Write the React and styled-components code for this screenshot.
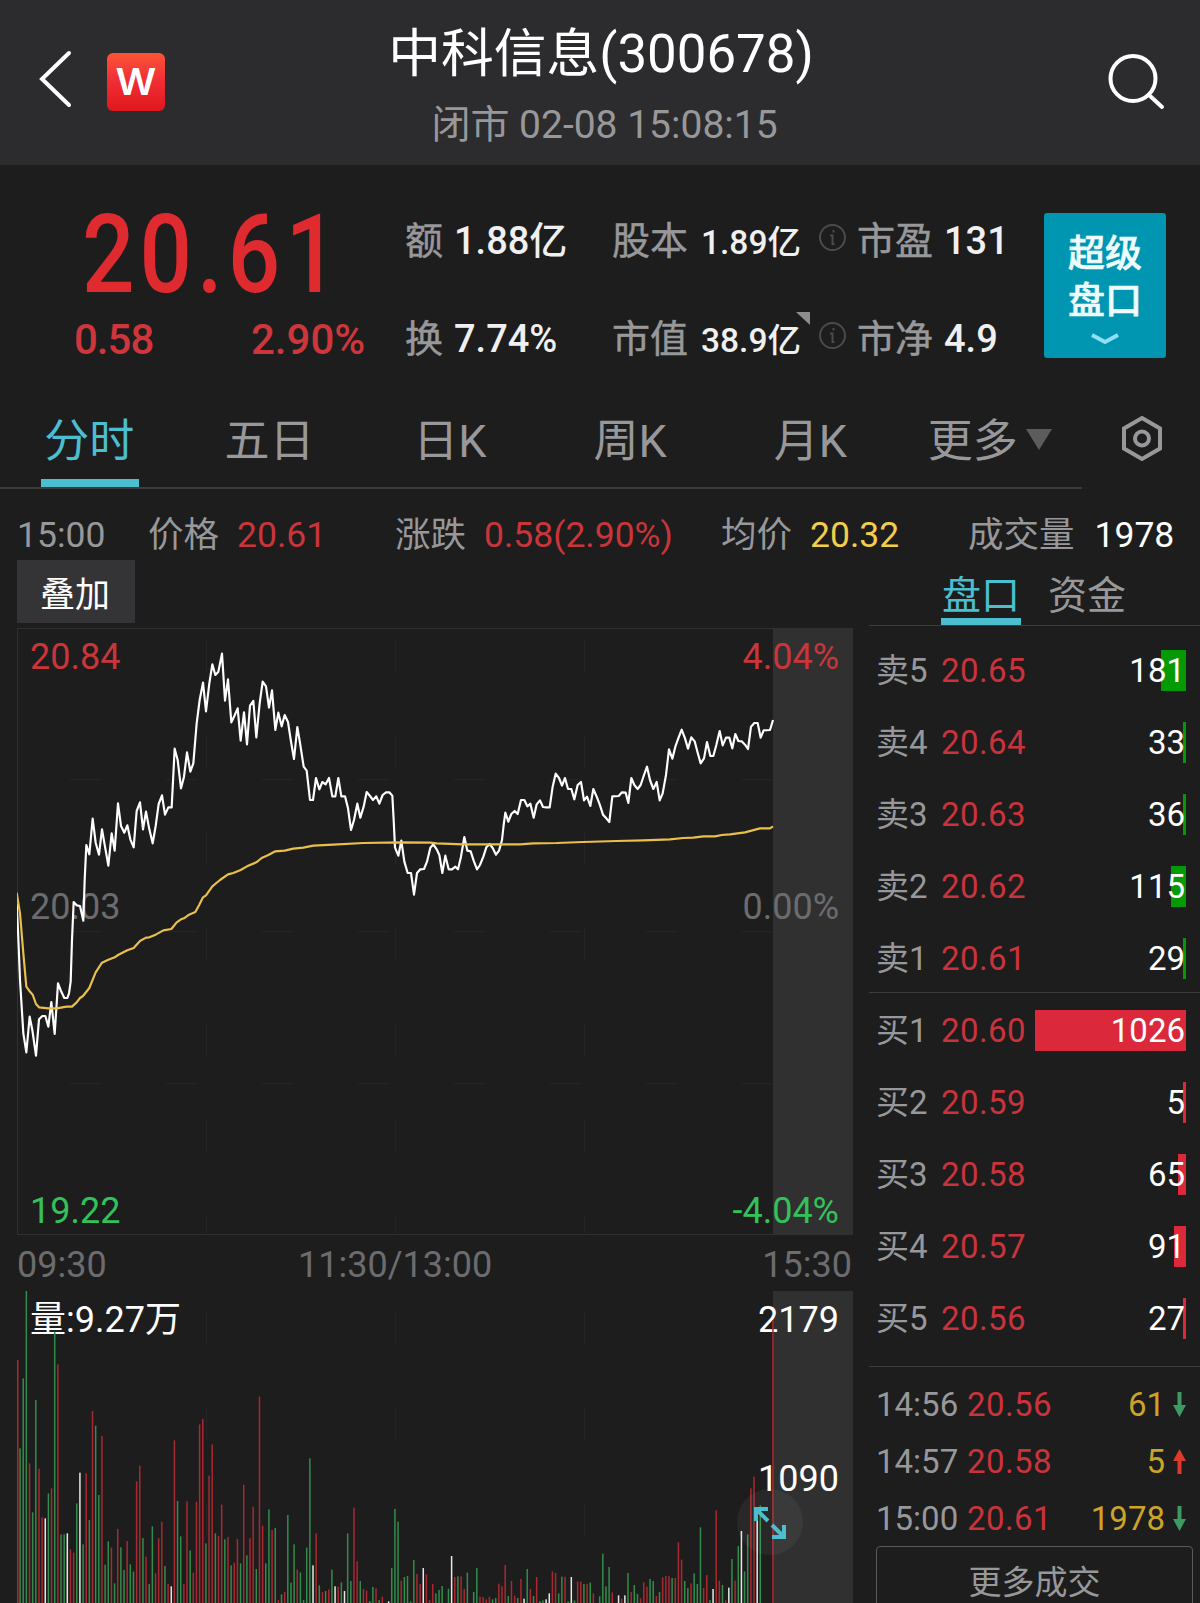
import styled, { createGlobalStyle, css } from 'styled-components'

const GlobalStyle = createGlobalStyle`
  * {
    box-sizing: border-box;
  }
  body {
    margin: 0;
    background: #1d1d1f;
    color: #fff;
    font-family: Roboto, 'Noto Sans CJK SC', sans-serif;
  }
`

const colors = {
  red: '#ca353a',
  green: '#33c25a',
  teal: '#4bbfd0',
  muted: '#98989a',
  dim: '#6c6c6e',
  line: '#3c3c3e'
}

const Page = styled.main`
  width: 1200px;
  height: 1603px;
  overflow: hidden;
  background: #1d1d1e;
  white-space: nowrap;
`

/* Header */

const Header = styled.header`
  display: grid;
  grid-template-columns: 1fr auto 1fr;
  height: 165px;
  background: #2c2c2e;
`

const HeaderLeft = styled.div`
  display: flex;
  align-items: flex-start;
  gap: 33px;
  padding: 50px 0 0 38px;
`

const Logo = styled.div`
  width: 58px;
  height: 58px;
  margin-top: 3px;
  border-radius: 6px;
  background: linear-gradient(#fb5437, #f02c35 50%, #e0181d);
  font: 600 37px/57px Inter, sans-serif;
  text-align: center;

  span {
    display: block;
    transform: scaleX(1.08);
  }
`

const HeaderTitle = styled.div`
  padding-top: 18px;
  text-align: center;
`

const StockName = styled.h1`
  margin: 0;
  padding-left: 2px;
  font-size: 52.8px;
  font-weight: 400;
  line-height: 72px;
`

const MarketTime = styled.div`
  padding-left: 9px;
  font-size: 39px;
  line-height: 70px;
  color: ${colors.muted};
`

const HeaderRight = styled.div`
  display: flex;
  justify-content: flex-end;
  padding: 52px 34px 0 0;
`

/* Quote */

const Quote = styled.section`
  display: flex;
  height: 237px;
`

const PriceBlock = styled.div`
  width: 405px;
  padding-top: 34px;
  color: #df2b30;
  font-weight: 500;
`

const Price = styled.div`
  padding-left: 82px;
  font-size: 110px;
  line-height: 111px;

  span {
    display: inline-block;
    letter-spacing: 6px;
    transform: scaleX(0.84);
    transform-origin: left;
  }
`

const Change = styled.div`
  display: grid;
  grid-template-columns: 177px auto;
  padding-left: 74px;
  font-size: 42px;
  line-height: 60px;
  color: #cf363b;

  span:first-child {
    letter-spacing: -1px;
  }
`

const Stats = styled.div`
  display: grid;
  grid-template-columns: 207px 207px 38px 1fr;
  grid-template-rows: 98px 99px;
  width: 639px;
  padding-top: 27px;
`

const Stat = styled.div`
  position: relative;
  display: flex;
  align-items: baseline;
  gap: ${p => (p.$small ? 13 : 11)}px;
  font-size: 38px;
  font-weight: 500;
  line-height: 98px;
  color: #f0f0f0;

  b {
    font-weight: 500;
    font-size: ${p => (p.$small ? 33.5 : 38)}px;
  }
`

const StatLabel = styled.span`
  font-weight: 400;
  -webkit-text-stroke: 0.5px;
  color: ${colors.muted};
`

const Corner = styled.i`
  position: absolute;
  top: 22px;
  left: 184px;
  width: 14px;
  height: 13px;
  background: #8e8e90;
  clip-path: polygon(0 0, 100% 0, 100% 100%);
`

const InfoCell = styled.div`
  padding-top: 31px;
`

const SuperButton = styled.button`
  display: flex;
  flex-direction: column;
  align-items: center;
  width: 122px;
  height: 145px;
  margin-top: 48px;
  padding: 15px 0 0;
  border: 0;
  border-radius: 3px;
  background: #0095b0;
  color: #eefcff;
  font: 500 37px/47px 'Noto Sans CJK SC', sans-serif;
  -webkit-text-stroke: 0.6px;

  svg {
    margin-top: 10px;
  }
`

/* Period tabs */

const TabBar = styled.nav`
  display: flex;
`

const Tabs = styled.div`
  display: grid;
  grid-template-columns: repeat(6, 1fr);
  width: 1082px;
  border-bottom: 2px solid ${colors.line};
`

const Tab = styled.div`
  display: flex;
  justify-content: center;
  align-items: center;
  font-size: 45px;
  line-height: 75px;
  color: ${colors.muted};

  span {
    padding: 2px 5px 0 3px;
    border-bottom: 8px solid transparent;
    ${p => p.$active && css`
      color: ${colors.teal};
      border-color: ${colors.teal};
    `}
  }
`

const MoreTab = styled(Tab)`
  gap: 3px;
  padding-right: 7px;

  svg {
    margin-bottom: 10px;
  }
`

const Settings = styled.div`
  padding: 13px 0 0 39px;
`

const Summary = styled.div`
  display: grid;
  grid-template-columns: 131px 247px 326px 247px 1fr;
  margin-top: 21px;
  padding-left: 17px;
  font-size: 35.5px;
  line-height: 50px;
  color: ${colors.muted};
`

const SummaryItem = styled.div`
  display: flex;
  gap: 18px;

  b {
    font-weight: 400;
    color: ${p => p.$color};
  }

  &:last-child {
    gap: 20px;
  }
`

/* Charts */

const Body = styled.div`
  display: flex;
`

const ChartColumn = styled.div`
  width: 869px;
  padding-left: 17px;
`

const Overlay = styled.button`
  display: block;
  width: 118px;
  height: 63px;
  margin-bottom: 5px;
  padding: 0 2px 2px 0;
  border: 0;
  background: #343437;
  color: #fff;
  font: 400 35px/63px 'Noto Sans CJK SC', sans-serif;
`

const ChartBox = styled.div`
  position: relative;
  width: 836px;
  height: ${p => p.$height}px;

  svg {
    position: relative;
    display: block;
  }
`

const ChartLabel = styled.span`
  position: absolute;
  top: ${p => p.$top}px;
  ${p => (p.$right ? 'right: 14px' : 'left: 13px')};
  font-size: 36px;
  line-height: 40px;
  color: ${p => p.$color || '#fff'};
`

const TimeAxis = styled.div`
  display: grid;
  grid-template-columns: 281px 1fr auto;
  width: 835px;
  height: 56px;
  font-size: 36px;
  line-height: 60px;
  color: ${colors.dim};
`

const ExpandButton = styled.div`
  position: absolute;
  top: 198px;
  left: 720px;
  width: 66px;
  height: 66px;
  border-radius: 50%;
  background: rgba(255, 255, 255, 0.05);
`

/* Order book */

const Book = styled.aside`
  width: 331px;
`

const BookTabs = styled.div`
  display: flex;
  gap: 26px;
  padding: 14px 0 0 72px;
  border-bottom: 1px solid ${colors.line};
`

const BookTab = styled.div`
  width: 80px;
  font-size: 39px;
  line-height: 44px;
  text-align: center;
  color: ${p => (p.$active ? colors.teal : colors.muted)};
  border-bottom: 7px solid ${p => (p.$active ? colors.teal : 'transparent')};
`

const Levels = styled.div`
  padding: ${p => (p.$sell ? '8px 14px 0 7px' : '1px 14px 0 7px')};
  height: ${p => (p.$sell ? 367 : 374)}px;
  border-bottom: 1px solid ${colors.line};
`

const Level = styled.div`
  display: grid;
  grid-template-columns: 65px 94px 151px;
  align-items: center;
  height: 72px;
  font-size: 33px;
  line-height: 41px;
  color: ${colors.muted};
`

const LevelPrice = styled.span`
  letter-spacing: 0.4px;
  color: #c9343c;
`

const Qty = styled.span`
  padding-right: 1px;
  text-align: right;
  color: #fff;
  background: linear-gradient(${p => p.$color}, ${p => p.$color}) right / ${p => p.$bar}px 100% no-repeat;
`

const Trades = styled.div`
  padding: 9px 14px 0 7px;
`

const Trade = styled.div`
  display: grid;
  grid-template-columns: 91px 1fr auto 13px;
  align-items: center;
  height: 57px;
  font-size: 33px;
  color: ${colors.muted};

  em {
    margin-right: 8px;
    font-style: normal;
    color: #cba428;
  }
`

const MoreTrades = styled.button`
  display: block;
  width: 317px;
  height: 68px;
  margin: -1px 0 0 7px;
  padding: 0;
  border: 1px solid #5a5a5c;
  border-radius: 4px;
  background: none;
  color: ${colors.muted};
  font: 400 33px/64px 'Noto Sans CJK SC', sans-serif;
`

const sells = [
  ['卖5', '20.65', 181, 25],
  ['卖4', '20.64', 33, 3],
  ['卖3', '20.63', 36, 3],
  ['卖2', '20.62', 115, 15],
  ['卖1', '20.61', 29, 3]
]

const buys = [
  ['买1', '20.60', 1026, 151],
  ['买2', '20.59', 5, 3],
  ['买3', '20.58', 65, 8],
  ['买4', '20.57', 91, 12],
  ['买5', '20.56', 27, 3]
]

const trades = [
  ['14:56', '20.56', 61, 'down'],
  ['14:57', '20.58', 5, 'up'],
  ['15:00', '20.61', 1978, 'down']
]

// Chart coordinates are three units to a pixel
const priceLine = `50,850 54,930 60,1080 70,1240 79,1297 89,1190 97,1230 108,1307 117,1198 127,1188 136,1188 145,1220
154,1146 164,1242 174,1090 183,1113 193,1134 202,1134 207,1120 212,1085 216,960 221,846 230,856 240,858 250,902
254,780 259,675 268,703 278,596 287,668 297,704 306,628 315,680 325,737 335,640 344,692 354,550 363,618 373,638
382,616 391,658 401,682 410,573 420,547 429,628 438,575 448,628 458,670 467,618 476,552 486,526 495,584 505,562
515,562 524,386 533,420 543,505 552,470 561,397 571,455 580,430 590,310 599,240 609,188 618,274 628,190 637,133
646,165 655,155 666,101 675,242 684,178 694,307 703,288 713,265 722,362 732,277 741,373 750,257 760,243 769,352
779,250 788,185 798,199 807,263 816,211 826,330 835,278 845,319 854,285 864,306 873,365 882,417 892,321 901,375
911,440 920,452 930,540 939,540 948,474 958,508 967,486 977,493 987,474 997,529 1006,529 1015,474 1024,529
1035,529 1044,565 1053,630 1062,600 1072,551 1081,593 1091,560 1100,516 1110,528 1119,540 1129,529 1138,551
1148,525 1158,517 1168,517 1177,527 1181,600 1185,683 1195,707 1204,662 1213,725 1223,759 1233,759 1242,824
1251,759 1261,748 1272,747 1281,725 1291,683 1300,673 1310,688 1318,705 1327,759 1336,707 1346,748 1356,748
1366,740 1374,748 1383,710 1393,651 1402,692 1412,694 1421,722 1431,748 1440,735 1450,710 1459,682 1469,672
1478,684 1488,704 1497,692 1506,660 1511,615 1516,578 1525,605 1534,582 1544,573 1553,582 1563,540 1573,540
1582,559 1591,551 1601,593 1610,553 1620,541 1629,561 1639,562 1649,562 1658,500 1667,461 1677,474 1686,497
1695,474 1704,507 1714,507 1723,538 1733,495 1743,486 1752,541 1761,530 1771,558 1780,507 1790,530 1799,553
1809,584 1819,595 1828,606 1837,529 1856,528 1866,517 1877,518 1885,549 1894,474 1903,495 1913,507 1922,495
1932,465 1941,440 1950,480 1960,507 1970,486 1979,541 1988,520 1998,465 2007,388 2017,416 2026,380 2036,352
2045,329 2055,355 2064,386 2074,352 2084,364 2093,398 2102,430 2112,415 2121,366 2131,408 2140,408 2149,375
2159,333 2168,376 2178,353 2188,353 2197,385 2206,342 2215,363 2225,364 2235,374 2244,387 2253,320 2263,309
2273,309 2282,353 2291,331 2310,330 2319,300`

const averageLine = `50,818 60,880 70,1000 79,1100 89,1114 98,1124 108,1152 117,1162 145,1165 170,1165 200,1160 216,1160
230,1147 240,1134 249,1128 268,1104 287,1057 306,1028 325,1019 344,1012 354,1005 382,991 401,984 420,963 438,953
448,952 467,944 490,931 514,927 530,907 543,898 552,895 567,884 586,876 598,854 609,832 618,826 637,799 660,780
684,763 700,759 722,750 741,739 769,727 785,714 805,705 826,694 854,692 880,686 910,683 940,677 1000,674 1090,669
1200,667 1290,668 1310,670 1390,673 1560,673 1600,670 1670,669 1750,666 1850,663 1930,661 2010,658 2050,654
2080,653 2110,649 2145,649 2165,645 2190,643 2235,637 2280,625 2310,625 2319,619`

// One entry a minute: colour letter and the top of the bar
const volumes = `r270 g535 g325 g63 r580 g727 g390 r596 r742 w745 g670 r655 g185 r283 g793 g793 w790 r838 r848 g700
w608 g823 r610 g750 r423 g467 g675 r498 g884 g814 r833 g940 r777 g832 g900 r813 g883 g905 r634 r587
g804 r860 g942 g769 r910 r805 r755 g888 r942 w949 r511 g693 g799 r942 r694 g841 r908 r695 r463 r447
g820 r617 r523 g790 r798 r704 g808 r801 g886 r878 r807 g880 r644 g856 r805 r710 g897 r380 r767 g880
g718 r780 g774 r990 g973 r966 g735 g938 g823 r899 g907 g990 g833 g565 w886 r790 g946 r966 g963 r958
g899 w949 r950 g937 w963 g790 g933 r713 r874 g933 r957 r962 g993 g951 r955 g990 r980 g999 w994 g894
g717 g755 r932 g921 g918 g994 g870 r912 r942 w894 r913 r990 r942 g970 g960 g948 g999 g956 w858 r921
g919 r919 r957 g908 g999 g966 g894 r980 r981 r988 r980 g988 g984 r941 r949 r885 g978 r933 r977 g984
r927 w986 g897 r957 g978 r921 g993 g991 w988 w970 r904 r909 g970 g920 r920 g994 w921 g991 r935 r935
g942 r942 g938 r970 g999 g979 g851 g949 g891 r967 g999 w976 r986 w976 g909 r966 g945 g972 r985 r937
r950 g927 g933 r978 g966 r922 r918 r918 g924 r924 r817 r869 g933 g954 r940 g910 g942 g772 r954 r915
g990 w957 r721 r932 g945 r991 w953 g867 r932 g828 w783 g904 g793 r655 r620 w717 g706 g999 g999 g999
r150`.split(/\s+/)

const barColor = { r: '#a8292f', g: '#328c4b', w: '#e6e6e6' }

const InfoIcon = () => (
  <svg width="27" height="29" viewBox="0 0 27 29" fill="none" stroke="#4b4b4d" strokeWidth="2">
    <circle cx="13.5" cy="14.5" r="12.5" />
    <path d="M14.500 7v2.500M11 12.500h2.500v8.500h2" />
  </svg>
)

const TradeArrow = ({ dir }) => (
  <svg width="13" height="25" viewBox="0 0 13 25" fill={dir === 'up' ? '#dd3a2c' : '#3d9b62'}>
    <path
      d="M4.5 0h4v13H13L6.5 25 0 13h4.5z"
      transform={dir === 'up' ? 'rotate(180 6.5 12.5)' : undefined}
    />
  </svg>
)

const PriceChart = () => (
  <svg width="836" height="607" viewBox="51 24 2508 1821" fill="none">
    <g stroke="#27272a" strokeWidth="3">
      <path d="M620 60v1780M1187 60v1780M1754 60v1780" strokeDasharray="96 192" />
      <path d="M52 479h2265M52 935h2265M52 1391h2265" strokeDasharray="96 192" strokeDashoffset="130" />
    </g>
    <path d="M2559 25.500H52.500V1843.500H2559" stroke="#303033" strokeWidth="3" />
    <polyline points={priceLine} stroke="#fff" strokeWidth="6.500" strokeLinejoin="round" />
    <polyline points={averageLine} stroke="#e9c04a" strokeWidth="6.500" strokeLinejoin="round" />
  </svg>
)

const VolumeChart = () => (
  <svg width="836" height="312" viewBox="51 63 2508 936">
    <path d="M620 63v936M1187 63v936M1754 63v936" stroke="#26262a" strokeWidth="3" strokeDasharray="96 192" strokeDashoffset="-63" />
    {volumes.map((v, i) => (
      <rect key={i} x={Math.max(51, 48.5 + i * 9.45)} y={v.slice(1)} width="4.500" height="1000" fill={barColor[v[0]]} />
    ))}
  </svg>
)

const Shade = styled.div`
  position: absolute;
  top: 0;
  right: 0;
  bottom: 0;
  width: 80px;
  background: #303031;
`

const LevelList = ({ rows, color, sell }) => (
  <Levels $sell={sell}>
    {rows.map(([label, price, qty, bar]) => (
      <Level key={label}>
        <span>{label}</span>
        <LevelPrice>{price}</LevelPrice>
        <Qty $color={color} $bar={bar}>{qty}</Qty>
      </Level>
    ))}
  </Levels>
)

const App = () => (
  <Page>
    <GlobalStyle />
    <Header>
      <HeaderLeft>
        <svg width="36" height="60" viewBox="0 0 36 60" fill="none" stroke="#fff" strokeWidth="4" strokeLinecap="round">
          <path d="M31 3 4 29 31 55" />
        </svg>
        <Logo><span>W</span></Logo>
      </HeaderLeft>
      <HeaderTitle>
        <StockName>中科信息(300678)</StockName>
        <MarketTime>闭市 02-08 15:08:15</MarketTime>
      </HeaderTitle>
      <HeaderRight>
        <svg width="60" height="60" viewBox="0 0 60 60" fill="none" stroke="#fff" strokeWidth="4" strokeLinecap="round">
          <circle cx="27" cy="26.500" r="22.500" />
          <path d="M43 43 56 55" />
        </svg>
      </HeaderRight>
    </Header>

    <Quote>
      <PriceBlock>
        <Price><span>20.61</span></Price>
        <Change>
          <span>0.58</span>
          <span>2.90%</span>
        </Change>
      </PriceBlock>
      <Stats>
        <Stat><StatLabel>额</StatLabel><b>1.88亿</b></Stat>
        <Stat $small><StatLabel>股本</StatLabel><b>1.89亿</b></Stat>
        <InfoCell><InfoIcon /></InfoCell>
        <Stat><StatLabel>市盈</StatLabel><b>131</b></Stat>
        <Stat><StatLabel>换</StatLabel><b>7.74%</b></Stat>
        <Stat $small><StatLabel>市值</StatLabel><b>38.9亿</b><Corner /></Stat>
        <InfoCell><InfoIcon /></InfoCell>
        <Stat><StatLabel>市净</StatLabel><b>4.9</b></Stat>
      </Stats>
      <SuperButton>
        <span>超级</span>
        <span>盘口</span>
        <svg width="28" height="14" viewBox="0 0 28 14" fill="none" stroke="#8fe0f5" strokeWidth="4">
          <path d="M1 3 14 10 27 3" />
        </svg>
      </SuperButton>
    </Quote>

    <TabBar>
      <Tabs>
        <Tab $active><span>分时</span></Tab>
        <Tab><span>五日</span></Tab>
        <Tab><span>日K</span></Tab>
        <Tab><span>周K</span></Tab>
        <Tab><span>月K</span></Tab>
        <MoreTab>
          <span>更多</span>
          <svg width="26" height="21" viewBox="0 0 26 21"><path d="M0 0h26L13 21z" fill="#5c5c5e" /></svg>
        </MoreTab>
      </Tabs>
      <Settings>
        <svg width="42" height="47" viewBox="0 0 42 47" fill="none" stroke={colors.muted} strokeWidth="4">
          <path d="M21 3 39 13.500v20L21 44 3 33.500v-20z" />
          <circle cx="21" cy="23.500" r="7" />
        </svg>
      </Settings>
    </TabBar>

    <Summary>
      <SummaryItem>15:00</SummaryItem>
      <SummaryItem $color={colors.red}>价格<b>20.61</b></SummaryItem>
      <SummaryItem $color={colors.red}>涨跌<b>0.58(2.90%)</b></SummaryItem>
      <SummaryItem $color="#f3cd4c">均价<b>20.32</b></SummaryItem>
      <SummaryItem $color="#fff">成交量<b>1978</b></SummaryItem>
    </Summary>

    <Body>
      <ChartColumn>
        <Overlay>叠加</Overlay>
        <ChartBox $height={607}>
          <Shade />
          <ChartLabel $top={9} $color={colors.red}>20.84</ChartLabel>
          <ChartLabel $top={9} $right $color={colors.red}>4.04%</ChartLabel>
          <ChartLabel $top={259} $color={colors.dim}>20.03</ChartLabel>
          <ChartLabel $top={259} $right $color={colors.dim}>0.00%</ChartLabel>
          <ChartLabel $top={563} $color={colors.green}>19.22</ChartLabel>
          <ChartLabel $top={563} $right $color={colors.green}>-4.04%</ChartLabel>
          <PriceChart />
        </ChartBox>
        <TimeAxis>
          <span>09:30</span>
          <span>11:30/13:00</span>
          <span>15:30</span>
        </TimeAxis>
        <ChartBox $height={312}>
          <Shade />
          <ChartLabel $top={9}>量:9.27万</ChartLabel>
          <ChartLabel $top={9} $right>2179</ChartLabel>
          <ChartLabel $top={168} $right>1090</ChartLabel>
          <VolumeChart />
          <ExpandButton>
            <svg width="66" height="66" viewBox="0 0 66 66" fill="none" stroke={colors.teal} strokeWidth="4">
              <path d="M31 20H19v12M19 20 31 32M35 36 47 48M47 36v12H35" />
            </svg>
          </ExpandButton>
        </ChartBox>
      </ChartColumn>

      <Book>
        <BookTabs>
          <BookTab $active>盘口</BookTab>
          <BookTab>资金</BookTab>
        </BookTabs>
        <LevelList rows={sells} color="#049a06" sell />
        <LevelList rows={buys} color="#dc283b" />
        <Trades>
          {trades.map(([time, price, qty, dir]) => (
            <Trade key={time}>
              <span>{time}</span>
              <LevelPrice>{price}</LevelPrice>
              <em>{qty}</em>
              <TradeArrow dir={dir} />
            </Trade>
          ))}
        </Trades>
        <MoreTrades>更多成交</MoreTrades>
      </Book>
    </Body>
  </Page>
)

export default App
